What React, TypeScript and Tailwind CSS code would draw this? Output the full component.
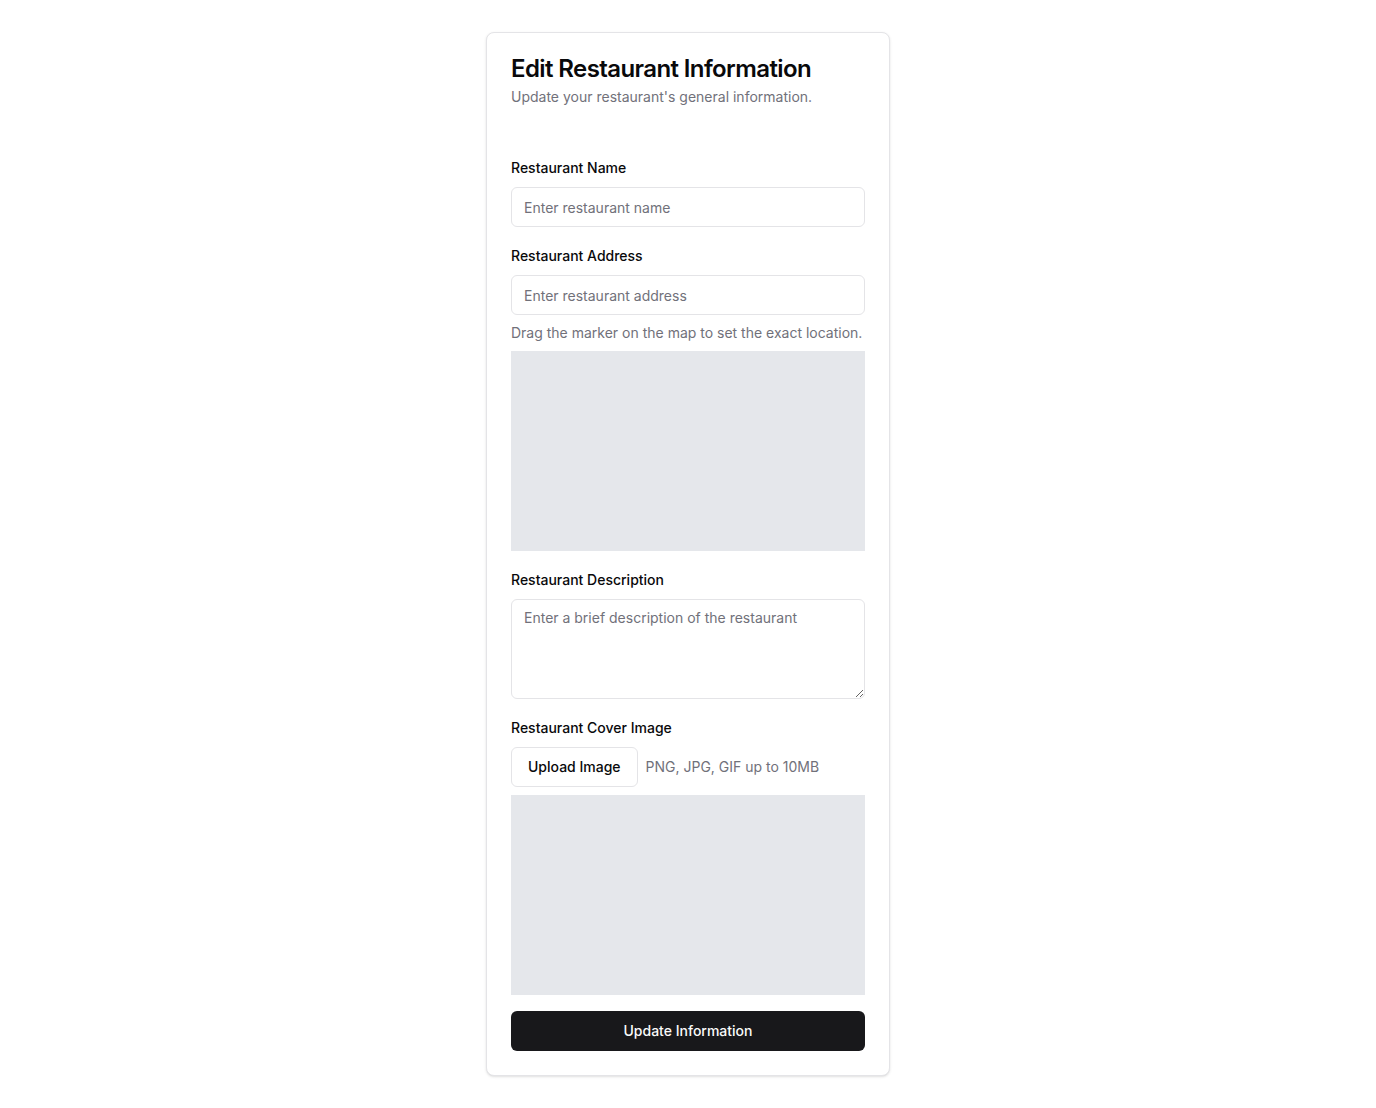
import React from 'react'

const labelClass = "block pb-px text-sm font-medium leading-5 text-[#09090b]"
const inputClass = "flex h-10 w-full rounded-md border border-[#e4e4e7] bg-white px-3 py-2 text-sm text-[#09090b] placeholder:text-[#71717a] outline-none"

const App = () => {
  return (
    <div className="min-h-screen bg-white pt-8 pb-8 font-['Inter','Liberation_Sans',sans-serif]">
      <div className="mx-auto w-[404px] rounded-lg border border-[#e4e4e7] bg-white text-[#09090b] shadow-sm">
        <div className="flex flex-col gap-1.5 p-6">
          <h1 className="text-2xl font-semibold leading-none tracking-tight">Edit Restaurant Information</h1>
          <p className="text-sm leading-5 text-[#71717a]">Update your restaurant's general information.</p>
        </div>

        <form className="flex flex-col gap-[19px] px-6 pt-[27px] pb-6" onSubmit={(e) => e.preventDefault()}>
          <div className="flex flex-col gap-2">
            <label className={labelClass}>Restaurant Name</label>
            <input type="text" className={inputClass} placeholder="Enter restaurant name" />
          </div>

          <div className="flex flex-col gap-2">
            <label className={labelClass}>Restaurant Address</label>
            <input type="text" className={inputClass} placeholder="Enter restaurant address" />
            <p className="text-sm leading-5 text-[#71717a]">Drag the marker on the map to set the exact location.</p>
            <div className="h-[200px] w-full bg-[#e5e7eb]"></div>
          </div>

          <div className="flex flex-col gap-2">
            <label className={labelClass}>Restaurant Description</label>
            <textarea
              className="h-[100px] w-full rounded-md border border-[#e4e4e7] bg-white px-3 py-2 text-sm leading-5 text-[#09090b] placeholder:text-[#71717a] outline-none"
              placeholder="Enter a brief description of the restaurant"
            />
          </div>

          <div className="flex flex-col gap-2">
            <label className={labelClass}>Restaurant Cover Image</label>
            <div className="flex items-center gap-2">
              <button type="button" className="h-10 rounded-md border border-[#e4e4e7] bg-white px-4 text-sm font-medium text-[#09090b]">
                Upload Image
              </button>
              <span className="text-sm text-[#71717a]">PNG, JPG, GIF up to 10MB</span>
            </div>
            <div className="h-[200px] w-full bg-[#e5e7eb]"></div>
          </div>

          <button type="submit" className="mt-[-3px] h-10 w-full rounded-md bg-[#18181b] text-sm font-medium text-[#fafafa]">
            Update Information
          </button>
        </form>
      </div>
    </div>
  )
}

export default App
